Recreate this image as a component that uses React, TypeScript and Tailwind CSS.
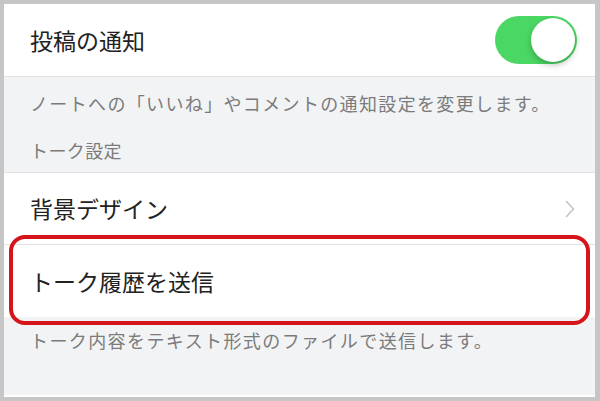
const jp = "font-['Noto_Sans_CJK_JP','Noto_Sans',sans-serif]";

function Toggle() {
  return (
    <div className="flex h-[48px] w-[82px] items-center justify-end rounded-full bg-[#4bd763] p-[2px]">
      <div className="h-[44px] w-[44px] rounded-full bg-white shadow-[0_3px_6px_rgba(0,0,0,0.25)]" />
    </div>
  );
}

function Chevron() {
  return (
    <svg width="10" height="18" viewBox="0 0 10 18" fill="none">
      <path d="M1.5 1.5 L8.5 9 L1.5 16.5" stroke="#c4c4c8" strokeWidth="1.6" strokeLinecap="round" strokeLinejoin="round" />
    </svg>
  );
}

export default function App() {
  return (
    <div className={`h-[401px] w-[600px] bg-[#c6c6c6] pb-[4px] pl-[4px] pr-[5px] pt-[4px] ${jp}`}>
      <div className="relative flex h-full flex-col border-b-[2px] border-white bg-[#f2f3f5]">
        <div className="flex h-[73px] items-center justify-between border-b border-[#e2e2e4] bg-white pl-[26px] pr-[18px]">
          <span className="text-[23px] text-[#222]">投稿の通知</span>
          <Toggle />
        </div>
        <div className="flex h-[96px] flex-col border-b border-[#e2e2e4] pl-[26px] text-[18px] text-[#7b7b7b]">
          <span className="mt-[13px] leading-[26px] tracking-[1.35px]">ノートへの「いいね」やコメントの通知設定を変更します。</span>
          <span className="mt-[21px] leading-[26px] tracking-[0.4px]">トーク設定</span>
        </div>
        <div className="flex h-[72px] items-center justify-between border-b border-[#e2e2e4] bg-white pl-[26px] pr-[20px]">
          <span className="text-[23px] text-[#222]">背景デザイン</span>
          <Chevron />
        </div>
        <div className="flex h-[72px] items-center bg-white pl-[26px]">
          <span className="text-[23px] text-[#222]">トーク履歴を送信</span>
        </div>
        <div className="pl-[26px] pt-[10px] text-[18px] leading-[26px] tracking-[1.4px] text-[#7b7b7b]">
          トーク内容をテキスト形式のファイルで送信します。
        </div>
        <div className="pointer-events-none absolute left-[5px] top-[231px] h-[90px] w-[581px] rounded-[16px] border-[4px] border-[#d6141b]" />
      </div>
    </div>
  );
}
